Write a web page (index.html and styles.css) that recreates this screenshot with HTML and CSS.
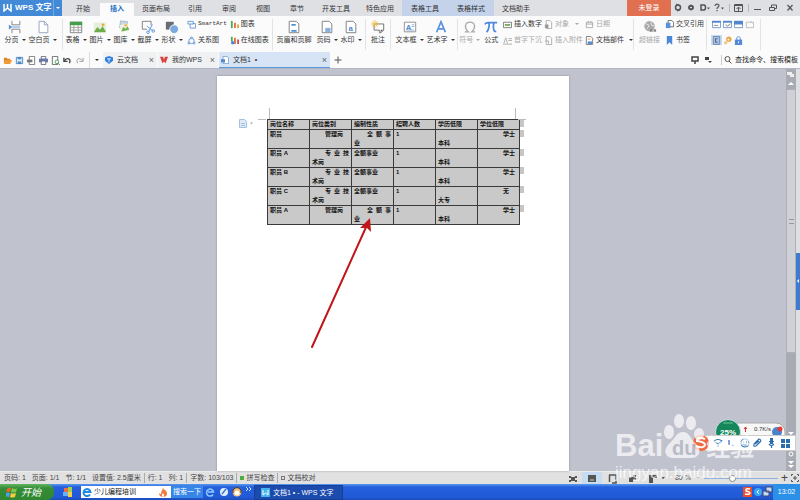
FILE: index.html
```html
<!DOCTYPE html>
<html lang="zh-CN">
<head>
<meta charset="utf-8">
<title>WPS 文字</title>
<link rel="stylesheet" href="styles.css">
</head>
<body>
<header class="titlebar">
  <button class="brand"><svg width="9" height="8" viewBox="0 0 9 8"><path d="M1 0v7l3.500-3L8 7V0M4.500 0v5" fill="none" stroke="#fff" stroke-width="1.500"/></svg><b>WPS 文字</b></button>
  <button class="brand-menu" aria-label="菜单"><i class="caret"></i></button>
  <nav class="tabs">
    <a href="#">开始</a><a href="#" class="on">插入</a><a href="#" class="wide">页面布局</a><a href="#">引用</a><a href="#">审阅</a><a href="#">视图</a><a href="#">章节</a><a href="#" class="wide">开发工具</a><a href="#" class="wide">特色应用</a><a href="#" class="tool">表格工具</a><a href="#" class="tool">表格样式</a><a href="#" class="wide">文档助手</a>
  </nav>
  <button class="login">未登录</button>
  <div class="window">
    <svg width="122" height="16" viewBox="0 0 122 16" fill="none" stroke="#505358">
      <circle cx="7" cy="7.500" r="2.500" stroke-width="1.500"/><path d="M5 4l3 1M6 11l3-1"/>
      <circle cx="20" cy="7.500" r="2.500" fill="#505358"/><circle cx="20" cy="7.500" r=".5" stroke="#fff"/>
      <path d="M30 5h3c2 0 2 5 0 5h-3z" stroke-width="1.500"/><path d="M36 7.500h3l-1.500 2z" fill="#505358" stroke="none"/>
      <path d="M44 6c0-2.500 4-2.500 4-.5 0 1.500-2 1.500-2 3.500m0 1v1.200" stroke-width="1.200"/><path d="M50 7.500h3l-1.500 2z" fill="#505358" stroke="none"/>
      <path d="M58.500 4v8M77.500 4v8" stroke="#b5b6ba"/>
      <path d="M63.500 4.500h8v7h-8zM63.500 5.500h8M67.500 11V7.500M65.500 9l2-2 2 2"/>
      <path d="M83 9.500h7"/>
      <path d="M98.500 7.500h5v3h-5zM100.500 7V5h5v3.500H104"/>
      <path d="M116.500 5l5 5.500M121.500 5l-5 5.500" stroke-width="1.200"/>
    </svg>
  </div>
</header>

<section class="ribbon">
  <div class="group g-page">
    <button class="big"><svg viewBox="0 0 16 16"><path d="M4.500 1v4.500h9V1M4.500 15v-4.500h9V15" fill="#fff" stroke="#777"/><path d="M1 5l4 3-4 3z" fill="#5a93d6"/><path d="M5 8h9" stroke="#5a93d6"/></svg><span>分页<i class="caret"></i></span></button>
    <button class="big w3"><svg viewBox="0 0 16 16"><path d="M3.500 1.500h6l4 4v9h-10z" fill="#fff" stroke="#8b9eb8"/><path d="M9.500 1.500v4h4" fill="none" stroke="#8b9eb8"/></svg><span>空白页<i class="caret"></i></span></button>
  </div>
  <div class="group g-insert">
    <button class="big"><svg viewBox="0 0 16 16"><path d="M1.500 2.500h13v12h-13z" fill="#fff" stroke="#777"/><path d="M1 2h14v4H1z" fill="#43a047"/><path d="M2 8.500h12M2 11.500h12M5.500 6v8M10.500 6v8" stroke="#999"/></svg><span>表格<i class="caret"></i></span></button>
    <button class="big"><svg viewBox="0 0 16 16"><path d="M1 3h14v11H1z" fill="#e4efda"/><path d="M1 14l4-6 3 3 3-4 4 7z" fill="#6eac4b"/><circle cx="11.500" cy="5.500" r="1.500" fill="#f0aa38"/></svg><span>图片<i class="caret"></i></span></button>
    <button class="big"><svg viewBox="0 0 16 16"><path d="M4 1l8 1-1 8-8-1z" fill="#c8d7e8" stroke="#a5b4c5"/><path d="M3 6l9-2 2 8-9 2z" fill="#eef3e0"/><path d="M5 13l2-5 3 2 2-3 2 4z" fill="#72b24e"/><circle cx="10" cy="6" r="1.500" fill="#f2b43d"/></svg><span>图库<i class="caret"></i></span></button>
    <button class="big"><svg viewBox="0 0 16 16" fill="none"><path d="M11.500 6V1.500h-10v9H7" stroke="#777"/><path d="M7 7l6 5M13 5l-4 8" stroke="#4d8fd8"/><circle cx="8" cy="14" r="1.500" stroke="#4d8fd8"/><circle cx="14" cy="12.500" r="1.500" stroke="#4d8fd8"/></svg><span>截屏<i class="caret"></i></span></button>
    <button class="big"><svg viewBox="0 0 16 16"><path d="M1 2h9v9H1z" fill="#686c73"/><circle cx="10.500" cy="10.500" r="5" fill="#7ba9e0" stroke="#fff"/></svg><span>形状<i class="caret"></i></span></button>
    <div class="pair">
      <button class="small"><svg viewBox="0 0 10 10" fill="none"><path d="M1 1.500h6v3H1zM3.500 4v5h6V4H6" stroke="#6998cf"/></svg><span class="mono">SmartArt</span></button>
      <button class="small"><svg viewBox="0 0 10 10" fill="none" stroke="#5c94d6"><circle cx="5" cy="5.500" r="3"/><circle cx="5" cy="2" r="1" fill="#fff"/><circle cx="2" cy="8" r="1" fill="#fff"/><circle cx="8" cy="8" r="1" fill="#fff"/></svg>关系图</button>
    </div>
    <div class="pair">
      <button class="small"><svg viewBox="0 0 10 10"><path d="M1 1h2v8H1z" fill="#52a552"/><path d="M4.500 3h2v6h-2z" fill="#e06f3e"/><path d="M8 5h2v4H8z" fill="#e0a03e"/></svg>图表</button>
      <button class="small"><svg viewBox="0 0 10 10"><path d="M1 1h2v5H1z" fill="#52a552"/><path d="M4.500 2h2v7h-2z" fill="#e06f3e"/><path d="M8 4h2v5H8z" fill="#d34c4c"/><circle cx="3" cy="7.500" r="2" fill="#4c8bd5"/></svg>在线图表</button>
    </div>
  </div>
  <div class="group g-header">
    <button class="big w4"><svg viewBox="0 0 16 16"><path d="M2.500 1.500h8l3 3v10h-11z" fill="#fff" stroke="#777"/><path d="M5 5.500h5M5 12.500h6" stroke="#4d8fd8" stroke-width="2"/></svg><span>页眉和页脚</span></button>
    <button class="big"><svg viewBox="0 0 16 16"><path d="M2.500 1.500h8l3 3v10h-11z" fill="#fff" stroke="#777"/><path d="M6 9h6v5H6z" fill="#87afe0"/></svg><span>页码<i class="caret"></i></span></button>
    <button class="big"><svg viewBox="0 0 16 16"><path d="M2.500 1.500h8l3 3v10h-11z" fill="#fff" stroke="#777"/><text x="5" y="12" class="glyph-a">a</text></svg><span>水印<i class="caret"></i></span></button>
  </div>
  <div class="group g-note">
    <button class="big"><svg viewBox="0 0 16 16"><path d="M3.500 4.500h11v7l-3 3h-2v-3h-6z" fill="#fff" stroke="#666"/><path d="M11 14v-3h3z" fill="#555"/><path d="M4.500 0v9M0 4.500h9M1.500 1.500l6 6M7.500 1.500l-6 6" stroke="#efb83a"/></svg><span>批注</span></button>
  </div>
  <div class="group g-text">
    <button class="big w3"><svg viewBox="0 0 16 16"><path d="M1.500 2.500h13v11h-13z" fill="#fff" stroke="#888"/><text x="3" y="11" class="glyph-a">A</text><path d="M10 5.500h3M10 7.500h3M4 11.500h9" stroke="#8aa9d0"/></svg><span>文本框<i class="caret"></i></span></button>
    <button class="big w3"><svg viewBox="0 0 16 16"><path d="M3 14L8 2l5 12M4.500 10h7" fill="none" stroke="#5b93e0" stroke-width="2"/></svg><span>艺术字<i class="caret"></i></span></button>
  </div>
  <div class="group g-symbol">
    <button class="big dim"><svg viewBox="0 0 16 16"><path d="M2 13.500h4C1 9 2 2.500 8 2.500s7 6.500 2 11h4" fill="none" stroke="#aaa" stroke-width="1.500"/></svg><span>符号<i class="caret"></i></span></button>
    <button class="big w1"><svg viewBox="0 0 16 16"><path d="M1 5c1-2 2-2 4-2h10M6 3c0 5-.5 8-3 11M11 3c-.5 6-.5 11 3 10" fill="none" stroke="#4f89dd" stroke-width="2"/></svg><span>公式</span></button>
    <div class="pair">
      <button class="small"><svg viewBox="0 0 10 10"><path d="M.5 2.500h9v6h-9z" fill="#fff" stroke="#777"/><path d="M2 5.500h6" stroke="#76a85b" stroke-width="2"/></svg>插入数字</button>
      <button class="small dim"><svg viewBox="0 0 10 10"><path d="M1 8l2-6 2 6M6 3h4M6 5h4M0 9h10" fill="none" stroke="#aaa"/></svg>首字下沉</button>
    </div>
    <div class="pair">
      <button class="small dim"><svg viewBox="0 0 10 10"><path d="M2.500.5h4l2 2v7h-6z" fill="none" stroke="#aaa"/><path d="M1 5h4v4H1z" fill="#999"/></svg>对象<i class="caret far"></i></button>
      <button class="small dim"><svg viewBox="0 0 10 10"><path d="M2.500.5h4l2 2v7h-6zM1 5.500h4v3" fill="none" stroke="#aaa"/></svg>插入附件</button>
    </div>
    <div class="pair">
      <button class="small dim"><svg viewBox="0 0 10 10"><path d="M1.500 2.500h7v6h-7zM1 4.500h8M3.500 1v2M6.500 1v2" fill="none" stroke="#aaa"/></svg>日期</button>
      <button class="small"><svg viewBox="0 0 10 10"><path d="M1.500.5h5l2 2v7h-7z" fill="#fff" stroke="#777"/><path d="M3 3.500h3" stroke="#e99f45"/><path d="M3 6h5v3H3z" fill="#5790d5"/></svg>文档部件<i class="caret"></i></button>
    </div>
  </div>
  <div class="group g-link">
    <button class="big w3 dim"><svg viewBox="0 0 16 16"><circle cx="7.500" cy="7" r="6" fill="#aaa"/><path d="M3 4l4 2-2 4M9 2l1 4 3 1" fill="none" stroke="#eee"/><path d="M8 12h3m1 0h3" stroke="#888" stroke-width="3"/></svg><span>超链接</span></button>
    <div class="pair">
      <button class="small"><svg viewBox="0 0 10 10"><path d="M3.500.5h4l2 2v5h-6z" fill="#fff" stroke="#666"/><path d="M1 3h5v6H1z" fill="#5b91d8"/></svg>交叉引用</button>
      <button class="small"><svg viewBox="0 0 10 10"><path d="M2 0h6v10L5 7l-3 3z" fill="#4c88d9"/></svg>书签</button>
    </div>
  </div>
  <div class="group g-form">
    <button class="cell" aria-label="文字框"><svg viewBox="0 0 10 10"><path d="M.5 1.500h9v7h-9z" fill="#fff" stroke="#6d96cd"/><path d="M0 1h10v2H0z" fill="#5286ce"/><path d="M2 6h5" stroke="#888"/></svg></button>
    <button class="cell" aria-label="复选框"><svg viewBox="0 0 10 10"><path d="M.5 1.500h9v7h-9z" fill="#fff" stroke="#6d96cd"/><path d="M0 1h10v2H0z" fill="#5286ce"/><path d="M3 5l2 2 3-3" fill="none" stroke="#666"/></svg></button>
    <button class="cell" aria-label="下拉框"><svg viewBox="0 0 10 10"><path d="M.5 1.500h9v7h-9z" fill="#fff" stroke="#6d96cd"/><path d="M0 1h10v4H0z" fill="#5286ce"/></svg></button>
    <button class="cell" aria-label="属性"><svg viewBox="0 0 10 10"><path d="M1.500 2.500h8v6h-8zM6 1l3 3" fill="none" stroke="#bbb"/></svg></button>
    <button class="cell pressed" aria-label="底纹"><svg viewBox="0 0 10 10"><path d="M1.500.5h7v9h-7z" fill="#a9c3e5" stroke="#6688b5"/><path d="M6 3H4v4h2" fill="none" stroke="#456"/></svg></button>
    <button class="cell" aria-label="清除"><svg viewBox="0 0 10 10"><circle cx="6.500" cy="3.500" r="3" fill="#efa64a"/><circle cx="3" cy="7.500" r="2" fill="#f5c88c"/><circle cx="6" cy="4" r="1" fill="#fff"/></svg></button>
    <button class="cell" aria-label="锁定"><svg viewBox="0 0 10 10"><path d="M3 5V3c0-3 4-3 4 0v2" fill="none" stroke="#5289d8"/><path d="M1 4h8v6H1z" fill="#5289d8"/><path d="M5 6v2" stroke="#fff"/></svg></button>
  </div>
</section>

<section class="docbar">
  <div class="quick">
    <button aria-label="打开"><svg viewBox="0 0 10 10"><path d="M1 2h3l1 1h3v2H3L1 8z" fill="#d98324"/><path d="M3 4.500h7L8 9H1z" fill="#f19a35"/></svg></button>
    <button aria-label="保存"><svg viewBox="0 0 10 10"><path d="M1.500 1.500h7v7h-7z" fill="#dcebfa" stroke="#4b87c2"/><path d="M3 1.500h4v2H3zM3 6h4v3H3z" fill="#4b87c2"/></svg></button>
    <button aria-label="输出"><svg viewBox="0 0 10 10"><path d="M2.500.5h6v9h-6z" fill="#fff" stroke="#777"/><path d="M0 4h6v3H0z" fill="#777"/></svg></button>
    <button aria-label="打印"><svg viewBox="0 0 10 10"><path d="M2.500.5h5v3h-5z" fill="#fff" stroke="#667"/><path d="M0 3h10v4H0z" fill="#6878b5"/><path d="M2.500 5.500h5v4h-5z" fill="#fff" stroke="#667"/></svg></button>
    <button aria-label="预览"><svg viewBox="0 0 10 10"><path d="M1.500.5h6v9h-6z" fill="#fff" stroke="#666"/><circle cx="6.500" cy="6.500" r="2" fill="#fff" stroke="#4a9a57"/><path d="M8 8l2 2" stroke="#4a9a57"/></svg></button>
    <button aria-label="撤销"><svg viewBox="0 0 10 10"><path d="M1 2v4h4" fill="none" stroke="#444" stroke-width="1.500"/><path d="M1.500 5.500C4 1 10 3 7 8" fill="none" stroke="#444" stroke-width="1.500"/></svg></button>
    <button aria-label="恢复"><svg viewBox="0 0 10 10"><path d="M9 2v4H5M8.500 5.500C6 1 0 3 3 8" fill="none" stroke="#999"/></svg></button>
  </div>
  <button class="more" aria-label="更多"><i class="caret"></i></button>
  <div class="doc d1"><svg viewBox="0 0 10 10"><path d="M5 0l5 2v4l-5 4-5-4V2z" fill="#2d7fe0"/><path d="M2.500 3.500h5M5 3.500V8" stroke="#fff"/></svg><span>云文档</span><button aria-label="关闭">×</button></div>
  <div class="doc d2"><svg viewBox="0 0 10 10"><path d="M0 1h4l1 4 1-4h4L7 9 5 7 3 9z" fill="#d6403d"/></svg><span>我的WPS</span><button aria-label="关闭">×</button></div>
  <div class="doc d3"><svg viewBox="0 0 10 10"><path d="M2.500.5h5l2 2v7h-7z" fill="#fff" stroke="#6d98c9"/><path d="M0 4h5v4H0z" fill="#538bd0"/></svg><span>文档1 &nbsp;•</span><button aria-label="关闭">×</button></div>
  <button class="plus" aria-label="新建"><svg viewBox="0 0 8 8"><path d="M4 .5v7M.5 4h7" stroke="#555"/></svg></button>
  <div class="find">
    <svg width="26" height="10" viewBox="0 0 26 10"><path d="M2 2h6v4H2zM5 6v3" fill="none" stroke="#444" stroke-width="1.500"/><path d="M15 2h4v3h-4zM18 6h4l-2 2z" fill="#444"/></svg>
    <label for="search"><svg width="8" height="10" viewBox="0 0 8 10"><circle cx="3.500" cy="4" r="2.500" fill="none" stroke="#555"/><path d="M5 6l2.500 2.500" stroke="#555"/></svg></label>
    <input id="search" type="text" value="查找命令、搜索模板" aria-label="查找命令、搜索模板">
  </div>
</section>

<main class="work">
  <div class="desk">
    <article class="page">
      <svg class="marks" width="280" height="14" viewBox="0 0 280 14"><path d="M11.500 0v11M0 11.500h8M257.500 0v11M260 11.500h8" fill="none" stroke="#bbb"/></svg>
      <svg class="pasteicon" width="16" height="9" viewBox="0 0 16 9"><path d="M.5.5h5l2 2v6h-7z" fill="#dfeaf7" stroke="#a5c2e3"/><path d="M2 4.500h4M2 6.500h4" stroke="#a5c2e3"/><path d="M11 3.500h3l-1.500 2z" fill="#aaa"/></svg>
      <table>
        <thead><tr><th>岗位名称</th><th>岗位类别</th><th>编制性质</th><th>招聘人数</th><th>学历低限</th><th>学位低限</th></tr></thead>
        <tbody>
          <tr><td>职员</td><td><p class="in">管理岗</p></td><td><p class="in spread"><span>全</span><span>额</span><span>事</span></p>业</td><td>1</td><td><br>本科</td><td><p class="deg">学士</p></td></tr>
          <tr><td>职员 A</td><td><p class="in spread"><span>专</span><span>业</span><span>技</span></p>术岗</td><td>全额事业</td><td>1</td><td><br>本科</td><td><p class="deg">学士</p></td></tr>
          <tr><td>职员 B</td><td><p class="in spread"><span>专</span><span>业</span><span>技</span></p>术岗</td><td>全额事业</td><td>1</td><td><br>本科</td><td><p class="deg">学士</p></td></tr>
          <tr><td>职员 C</td><td><p class="in spread"><span>专</span><span>业</span><span>技</span></p>术岗</td><td>全额事业</td><td>1</td><td><br>大专</td><td><p class="deg">无</p></td></tr>
          <tr><td>职员 A</td><td><p class="in">管理岗</p></td><td><p class="in spread"><span>全</span><span>额</span><span>事</span></p>业</td><td>1</td><td><br>本科</td><td><p class="deg">学士</p></td></tr>
        </tbody>
      </table>
      <svg class="ends" width="4" height="95" viewBox="0 0 4 95"><path d="M0 1h4v7H0zM0 11h4v7H0zM0 30h4v7H0zM0 48h4v7H0zM0 67h4v7H0zM0 86h4v7H0z" fill="#c6c6c6"/></svg>
      <svg class="arrow" width="64" height="132" viewBox="0 0 64 132"><path d="M2 130L57 8" stroke="#c01519" stroke-width="2" stroke-linecap="round"/><path d="M60 1l1 14-4-4-7 0z" fill="#c01519"/></svg>
    </article>
  </div>
  <div class="scroll">
    <div class="scroll-top"><svg width="10" height="20" viewBox="0 0 10 20"><path d="M1 3h5v3H1zM4 5h4v3H4z" fill="#eee"/><path d="M2 16h6l-3-3z" fill="#fff"/></svg></div>
    <div class="thumb"><i></i></div>
    <div class="scroll-rest"><svg width="10" height="40" viewBox="0 0 10 40"><path d="M2 2h6L5 5zM2 31h6l-3 3zM2 35h6l-3 3z" fill="#fff"/><circle cx="5" cy="24" r="2" fill="none" stroke="#fff"/></svg></div>
  </div>
  <div class="side"><button aria-label="展开"><svg width="4" height="6" viewBox="0 0 4 6"><path d="M3 1v4L1 3z" fill="#fff"/></svg></button></div>
</main>

<footer class="status">
  <div class="info"><span>页码: 1</span><span>页面: 1/1</span><span>节: 1/1</span><span>设置值: 2.5厘米</span><span class="bar">行: 1</span><span>列: 1</span><span class="bar">字数: 103/103</span><span class="bar"><i class="dot"></i>拼写检查</span><span class="bar"><i class="dot off"></i>文档校对</span></div>
  <div class="views">
    <svg width="92" height="13" viewBox="0 0 92 13"><path d="M16 0h20v13H16z" fill="#c7dcf3"/><path d="M3 4h2v2H3zM9 4h2v2H9zM3 8h2v2H3zM9 8h2v2H9zM5 5h4v4H5zM22 3h8v7h-8z" fill="#555"/><path d="M24 8h4" stroke="#ccc"/><path d="M43 3h7v8h-4M43.500 3v7" fill="none" stroke="#555" stroke-width="1.500"/><path d="M63 5h4v5h-4zM67 3h3v5h-3zM83 3h8v3h-4v5h-4z" fill="#555"/></svg>
    <i class="caret"></i><span class="pct">80 %</span><span>−</span><input type="range" min="0" max="100" value="38" aria-label="显示比例"><span class="zoom-in">+</span>
    <svg width="8" height="8" viewBox="0 0 8 8"><path d="M.5 2V.5H2M6 .5h1.500V2M7.500 6v1.500H6M2 7.500H.5V6M3 3h2v2H3z" fill="none" stroke="#555"/></svg>
  </div>
</footer>

<footer class="taskbar">
  <button class="start"><svg width="12" height="11" viewBox="0 0 12 11"><path d="M1 2q2-2 4-1L4 5Q2 4 0 5z" fill="#f0602e"/><path d="M6 1q3 2 5 0l-1 4Q7 6 5 5z" fill="#7dc84c"/><path d="M0 6q2-1 4 0L3 10Q1 9-1 10z" fill="#4ca0f0"/><path d="M5 6q2 1 5 0l-1 4q-3 1-5 0z" fill="#f8cc3e"/></svg><span>开始</span></button>
  <svg class="pin" width="10" height="10" viewBox="0 0 10 10"><path d="M1 1h4v4H1z" fill="#ef6b42"/><path d="M5 0h4v5H5z" fill="#a2d24b"/><path d="M0 5h5v4H0z" fill="#62b4f6"/><path d="M5 5h4v5H5z" fill="#f5ce4e"/></svg>
  <div class="desksearch"><svg width="10" height="10" viewBox="0 0 10 10"><path d="M8 7.500A3.500 3.500 0 118.500 5H2" fill="none" stroke="#238ce0" stroke-width="2"/></svg><input type="text" value="少儿编程培训" aria-label="搜索"><svg width="10" height="10" viewBox="0 0 10 10"><path d="M5 0c0 3 4 3 4 6.500q0 3-3.500 3.500 1.500-2-.5-4-2 2-.5 4Q1 9.500 1 6c1 1 1 1 2 1 0-3 2-4 2-7z" fill="#ef7c43"/></svg></div>
  <button class="go">搜索一下</button>
  <svg class="launch" width="46" height="12" viewBox="0 0 46 12"><path d="M8 8.500A3.500 3.500 0 118.500 6H3" fill="none" stroke="#8ccbff" stroke-width="1.500"/><circle cx="19" cy="6" r="4" fill="#dceeff"/><path d="M17 8l4-5" stroke="#4478c0" stroke-width="1.500"/><circle cx="32" cy="6" r="4.500" fill="#eebb79"/><circle cx="32" cy="7" r="2.500" fill="#fff"/><path d="M28 7V4q4-5 8 0v3" fill="none" stroke="#432"/><path d="M41 1l2 2-2 2M44 1l2 2-2 2" fill="none" stroke="#cfe4ff"/></svg>
  <button class="task"><svg width="9" height="9" viewBox="0 0 9 9"><path d="M0 0h9v9H0z" fill="#47b4ee"/><path d="M2 2v5l2.500-2L7 7V2" fill="none" stroke="#fff"/></svg>文档1 • - WPS 文字</button>
  <div class="tray"><svg width="30" height="12" viewBox="0 0 30 12"><path d="M0 1h9v10H0z" fill="#f04d26"/><path d="M7 3Q2 2 3 5q4 1 4 2 0 2-5 1" fill="none" stroke="#fff" stroke-width="1.500"/><circle cx="15" cy="6" r="4" fill="#3aa7f5"/><path d="M16 4l-2 2 2 2" fill="none" stroke="#fff"/><path d="M23 1h6v5h-6zM20 5h6v5h-6z" fill="#c5dcf2" stroke="#447"/></svg></div>
  <div class="clock">13:02</div>
</footer>

<aside class="speed"><svg width="74" height="27" viewBox="0 0 74 27"><rect x="12" y="4" width="59" height="20" rx="9" fill="#f8f8f8" stroke="#aaa"/><circle cx="14" cy="13" r="12.500" fill="#15875a" stroke="#cde"/><path d="M9 4h10" stroke="#6fc69d"/><path d="M31.500 8v5M30 10l1.500-2 1.500 2" fill="none" stroke="#d33"/><circle cx="63" cy="13" r="5" fill="#4a83cc"/><circle cx="66" cy="10" r="2.500" fill="#e23b38"/><text x="6" y="16" class="ball">25%</text><text x="40" y="12" class="rate">0.7K/s</text></svg></aside>
<aside class="ime"><svg width="84" height="14" viewBox="0 0 84 14" fill="none" stroke="#2b6caf" stroke-width="1.200"><path d="M3 5q4-3 8 0-4 5-8 0M7 7v4M18 4v5M21 9l2 1"/><circle cx="34" cy="7" r="4"/><path d="M32 6h1M35 6h1M32 8q2 2 4 0M43 8l5-5q3 1 1 3l-4 4q-3 1-2-2zM44 8l4-3"/><path d="M58 5.500h5M58 8q2.500 3 5 0M60.500 9v3"/><path d="M59 2h3v6h-3zM70 3h4v4h-4zM75 3h4v4h-4zM70 8h4v4h-4zM75 8h4v4h-4z" fill="#2b6caf" stroke="none"/></svg></aside>
<aside class="ime-logo"><svg width="18" height="18" viewBox="0 0 18 18"><circle cx="9" cy="9" r="8" fill="#ef6a40"/><path d="M13 5Q5 2 5 7q8 1 8 4-1 4-9 1" fill="none" stroke="#fff" stroke-width="2"/></svg></aside>
<aside class="mark">
  <div class="mark-name"><span>Bai</span><svg width="45" height="46" viewBox="0 0 45 46"><g fill="#fff"><ellipse cx="8" cy="18" rx="5" ry="7"/><ellipse cx="18" cy="7" rx="5" ry="7"/><ellipse cx="30" cy="9" rx="5" ry="7"/><ellipse cx="38" cy="20" rx="5" ry="6"/><path d="M22 18c7 0 7 7 13 12 8 8 1 15-6 14H14C5 45 1 37 8 30c6-5 7-12 14-12z"/></g><text x="11" y="41" class="du">du</text></svg><span class="cn">经验</span></div>
  <div class="mark-url">jingyan.baidu.com</div>
</aside>
</body>
</html>
```
FILE: styles.css
```css
* { box-sizing: border-box; }
body {
  margin: 0;
  min-height: 100vh;
  display: flex;
  flex-direction: column;
  position: relative;
  overflow: hidden;
  font: 7px/10px "Liberation Sans", "Noto Sans CJK SC", sans-serif;
  color: #333;
  background: #c0c2ce;
}
button, input {
  font: inherit;
  color: inherit;
  border: 0;
  padding: 0;
  margin: 0;
  background: none;
}
a { color: inherit; text-decoration: none; }
p { margin: 0; }
svg { flex: none; display: block; }
.caret {
  display: inline-block;
  flex: none;
  border: 2px solid transparent;
  border-top-color: currentColor;
  border-bottom: 0;
  width: 0;
  height: 0;
  margin-left: 3px;
  vertical-align: middle;
}
.caret.far { margin-left: 4px; }

/* title bar */
.titlebar { display: flex; height: 16px; background: #dfe0e4; }
.brand { display: flex; align-items: center; gap: 3px; width: 53px; padding-left: 3px; background: #4289d7; color: #fff; font-size: 8px; white-space: nowrap; }
.brand-menu { width: 9px; background: #4289d7; color: #fff; border-left: 1px solid #73a8e2; display: flex; align-items: center; }
.brand-menu .caret { margin-left: 2px; }
.tabs { display: flex; margin-left: 4px; }
.tabs a { width: 34px; padding-top: 4px; text-align: center; white-space: nowrap; }
.tabs .wide { width: 44px; }
.tabs .tool { width: 46px; background: #c4d2ea; }
.tabs .on { background: #fbfbfc; color: #2a72c8; font-weight: bold; margin-top: 3px; padding-top: 1px; }
.login { width: 44px; margin-left: auto; background: #e0704f; color: #fff; }
.window { width: 129px; }

/* ribbon */
.ribbon { display: flex; height: 36px; padding: 3px 0 2px; background: #fbfbfc; }
.group { display: flex; flex: none; border-right: 1px solid #e2e3e6; }
.g-page { width: 63px; padding-left: 3px; }
.g-insert { width: 210px; padding-left: 1px; }
.g-header { width: 93px; }
.g-note { width: 25px; }
.g-text { width: 67px; padding-left: 3px; }
.g-symbol { width: 176px; }
.g-link { width: 73px; }
.big { width: 24px; display: flex; flex-direction: column; align-items: center; gap: 1px; white-space: nowrap; }
.big svg { width: 14px; height: 14px; margin-top: 1px; }
.big.w1 { width: 20px; }
.big.w3 { width: 31px; }
.big.w4 { width: 42px; }
.dim { color: #a9a9a9; }
.pair { display: flex; flex-direction: column; gap: 6px; margin-left: 3px; }
.g-symbol .pair { margin-left: 2px; }
.g-link .pair { margin-left: 0; }
.small { display: flex; align-items: center; gap: 2px; height: 10px; white-space: nowrap; }
.small svg { width: 9px; height: 9px; }
.mono { font: 6px/10px "Liberation Mono", monospace; }
.g-form { display: grid; grid-template-columns: repeat(4, 11px); grid-auto-rows: 10px; row-gap: 6px; padding: 0 5px 0 4px; }
.cell { display: flex; align-items: center; justify-content: center; }
.cell svg { width: 9px; height: 9px; }
.pressed { background: #c9daef; }

/* document tabs */
.docbar { display: flex; height: 17px; align-items: stretch; background: #fbfbfc; border-bottom: 1px solid #b2b7c8; }
.quick { display: flex; gap: 3px; align-items: center; padding-left: 3px; }
.quick svg { width: 9px; height: 9px; }
.more { width: 14px; margin-left: 5px; border-left: 1px solid #ddd; }
.more .caret { margin: 0; }
.doc { display: flex; align-items: center; gap: 4px; padding: 0 3px 0 2px; background: #f0f1f3; margin-right: 1px; white-space: nowrap; }
.doc svg { width: 8px; height: 8px; }
.doc button { margin-left: auto; font-size: 9px; color: #666; }
.d1 { width: 54px; }
.d2 { width: 60px; }
.d3 { width: 111px; background: #d7e4f5; border-bottom: 1px solid #5a97dc; }
.plus { width: 14px; display: flex; align-items: center; justify-content: center; }
.plus svg { width: 8px; height: 8px; }
.find { display: flex; align-items: center; gap: 3px; margin-left: auto; }
.find > svg { margin-right: 2px; }
.find label { border-left: 1px solid #ccc; padding-left: 2px; }
.find input { width: 65px; color: #222; }

/* workspace */
.work { flex: 1; display: flex; background: #c0c2ce; }
.desk { flex: 1; display: flex; justify-content: center; padding-top: 7px; }
.page { position: relative; width: 352px; padding: 43px 50px; background: #fff; box-shadow: 0 0 2px #888b98; }
.page table { width: 253px; table-layout: fixed; border-collapse: collapse; background: #c9c9c9; color: #111; font-size: 6px; line-height: 9px; font-weight: bold; }
.page th, .page td { border: 1px solid #3a3a3a; padding: 0 2px; text-align: left; vertical-align: top; white-space: nowrap; }
.in { padding-left: 13px; }
.spread { display: flex; justify-content: space-between; }
.deg { padding-left: 23px; }
.marks { position: absolute; left: 41px; top: 32px; }
.pasteicon { position: absolute; left: 22px; top: 43px; }
.ends { position: absolute; left: 303px; top: 43px; }
.arrow { position: absolute; left: 93px; top: 141px; }
.scroll { width: 10px; display: flex; flex-direction: column; background: #a8aab4; }
.thumb { flex: 1; display: flex; align-items: center; justify-content: center; background: #d0d1d6; border: 1px solid #aeb0b8; }
.thumb i { width: 5px; height: 5px; border: 1px solid #999; border-width: 1px 0; }
.scroll-rest { height: 118px; display: flex; align-items: flex-end; padding-bottom: 1px; }
.side { width: 4px; background: #dedfe3; display: flex; flex-direction: column; justify-content: center; }
.side button { height: 57px; background: #3c7bd0; margin-top: 22px; }

/* status bar */
.status { display: flex; align-items: center; justify-content: space-between; height: 13px; padding: 0 1px 0 4px; background: #e1e1e2; border-top: 1px solid #ececec; color: #444; }
.info { display: flex; gap: 6px; white-space: nowrap; }
.bar { border-left: 1px solid #aaa; padding-left: 3px; margin-left: -3px; }
.dot { display: inline-block; width: 4px; height: 4px; background: #4dac3d; margin-right: 2px; vertical-align: middle; }
.dot.off { background: none; border: 1px solid #777; }
.views { display: flex; align-items: center; gap: 3px; }
.views .caret { margin: 0; }
.pct { margin: 0 3px 0 7px; }
.views input { appearance: none; width: 74px; height: 1px; background: #8eb2df; }
.views input::-webkit-slider-thumb { appearance: none; width: 7px; height: 7px; border: 1px solid #888; border-radius: 50%; background: #fff; }
.zoom-in { font-size: 12px; }

/* task bar */
.taskbar { display: flex; align-items: stretch; height: 16px; background: linear-gradient(#5c9bee, #2560dc 3px, #2159d6 13px, #1c4cb8); color: #fff; white-space: nowrap; }
.taskbar > svg { align-self: center; }
.start { display: flex; align-items: center; gap: 3px; width: 54px; padding-left: 6px; border-radius: 0 7px 7px 0; background: linear-gradient(#62b662, #368d38 4px, #2f8732); font: italic 10px/12px "Noto Sans CJK SC", sans-serif; }
.pin { margin: 0 8px 0 9px; }
.desksearch { display: flex; align-items: center; gap: 2px; width: 90px; margin: 2px 0; padding: 0 3px 0 1px; background: #fff; color: #111; }
.desksearch input { flex: 1; min-width: 0; }
.go { width: 32px; margin: 2px 0; background: #3586e7; }
.launch { margin-left: 2px; }
.task { display: flex; align-items: center; gap: 3px; width: 89px; margin: 1px 0 0 3px; padding-left: 6px; background: #1b4bac; border: 1px solid #173f98; }
.tray { margin-left: auto; display: flex; align-items: center; }
.clock { display: flex; align-items: center; justify-content: center; width: 27px; background: #2b91e8; }

/* floating widgets */
.speed { position: absolute; right: 12px; bottom: 54px; }
.ball { font: bold 8px "Liberation Sans", sans-serif; fill: #fff; }
.rate { font: 6px "Liberation Sans", sans-serif; fill: #333; }
.ime { position: absolute; right: 4px; bottom: 49px; padding-left: 12px; background: #fff; border: 1px solid #ccc; }
.ime-logo { position: absolute; right: 90px; bottom: 48px; }
.mark { position: absolute; right: 45px; bottom: 17px; width: 140px; color: #fff; opacity: 0.7; white-space: nowrap; }
.mark-name { display: flex; align-items: flex-end; font: bold 31px/34px "Liberation Sans", sans-serif; }
.mark-name svg { margin-bottom: 3px; margin-left: -2px; }
.cn { font: bold 24px/34px "Noto Sans CJK SC", sans-serif; }
.du { font: bold 20px "Liberation Sans", sans-serif; fill: #b5b8c4; }
.mark-url { font: 17px/20px "Liberation Sans", sans-serif; }
.glyph-a { font: bold 9px "Liberation Sans", sans-serif; fill: #4e8ad0; }
```
